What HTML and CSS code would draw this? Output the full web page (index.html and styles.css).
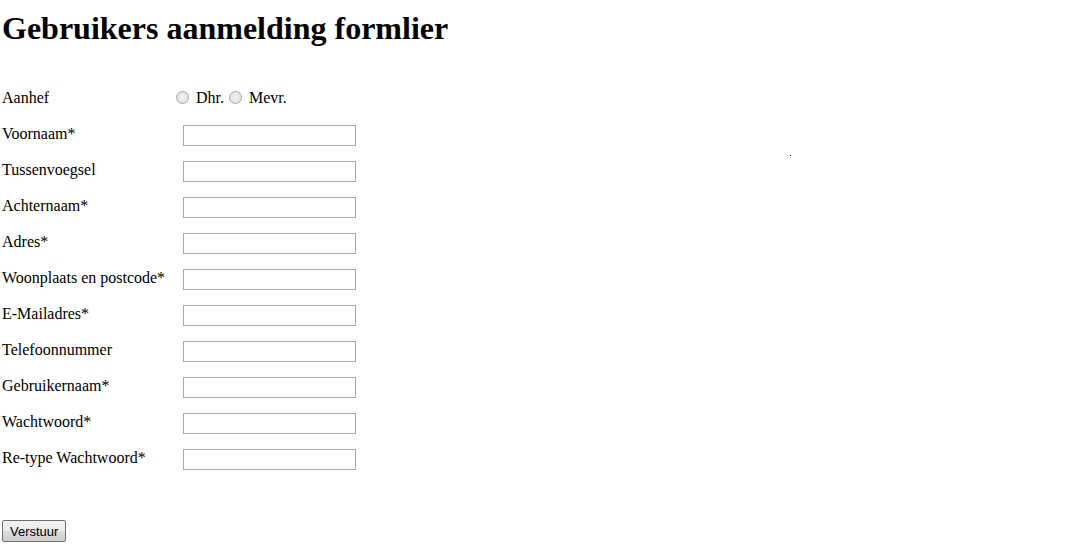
FILE: index.html
```html
<!DOCTYPE html>
<html lang="nl">
<head>
<meta charset="utf-8">
<title>Gebruikers aanmelding formlier</title>
<link rel="stylesheet" href="styles.css">
</head>
<body>
<div class="page">
  <h1 class="title">Gebruikers aanmelding formlier</h1>
  <form class="form">
    <div class="row">
      <label class="label">Aanhef</label>
      <div class="radios">
        <input type="radio" class="radio" name="aanhef" id="dhr"><span class="opt">Dhr.</span>
        <input type="radio" class="radio" name="aanhef" id="mevr"><span class="opt">Mevr.</span>
      </div>
    </div>
    <div class="row"><label class="label">Voornaam*</label><input class="field" type="text"></div>
    <div class="row"><label class="label">Tussenvoegsel</label><input class="field" type="text"></div>
    <div class="row"><label class="label">Achternaam*</label><input class="field" type="text"></div>
    <div class="row"><label class="label">Adres*</label><input class="field" type="text"></div>
    <div class="row"><label class="label">Woonplaats en postcode*</label><input class="field" type="text"></div>
    <div class="row"><label class="label">E-Mailadres*</label><input class="field" type="text"></div>
    <div class="row"><label class="label">Telefoonnummer</label><input class="field" type="text"></div>
    <div class="row"><label class="label">Gebruikernaam*</label><input class="field" type="text"></div>
    <div class="row"><label class="label">Wachtwoord*</label><input class="field" type="password"></div>
    <div class="row"><label class="label">Re-type Wachtwoord*</label><input class="field" type="password"></div>
    <div class="actions"><button class="submit" type="button">Verstuur</button></div>
  </form>
  <span class="dot"></span>
</div>
</body>
</html>
```
FILE: styles.css
```css
html, body {
  margin: 0;
  padding: 0;
  background: #ffffff;
}
body {
  font-family: "Liberation Serif", "Times New Roman", serif;
  font-size: 16px;
  color: #000;
}
.page {
  position: relative;
  padding-left: 2px;
  padding-top: 10px;
}
.title {
  margin: 0;
  font-size: 32px;
  font-weight: bold;
  line-height: 37px;
}
.form {
  margin-top: 33px;
}
.row {
  display: flex;
  align-items: flex-start;
  height: 36px;
}
.label {
  width: 181px;
  flex: none;
  line-height: 36px;
}
.field {
  margin: 9px 0 0 0;
  width: 173px;
  height: 21px;
  box-sizing: border-box;
  border: 1px solid #a9a9a9;
  padding: 1px 2px;
  font: 13px "Liberation Sans", Arial, sans-serif;
  background: #fff;
}
.radios {
  display: flex;
  align-items: flex-start;
  margin-left: -7px;
  line-height: 36px;
}
.radio {
  appearance: none;
  -webkit-appearance: none;
  width: 13px;
  height: 13px;
  margin: 11px 7px 0 0;
  border: 1px solid #a8a8a8;
  border-radius: 50%;
  box-sizing: border-box;
  background: radial-gradient(circle at 50% 50%, #f4f4f4 0%, #e2e2e2 70%, #d6d6d6 100%);
}
.opt {
  margin-right: 5px;
}
.actions {
  margin-top: 44px;
}
.submit {
  margin: 0;
  height: 22px;
  padding: 0 7px;
  border: 1px solid #707070;
  border-radius: 2px;
  background: linear-gradient(#f2f2f2, #ebebeb 50%, #dddddd 50%, #cfcfcf);
  font: 13px "Liberation Sans", Arial, sans-serif;
  color: #000;
}
.dot {
  position: absolute;
  left: 790px;
  top: 155px;
  width: 1px;
  height: 1px;
  background: #000;
}
```
